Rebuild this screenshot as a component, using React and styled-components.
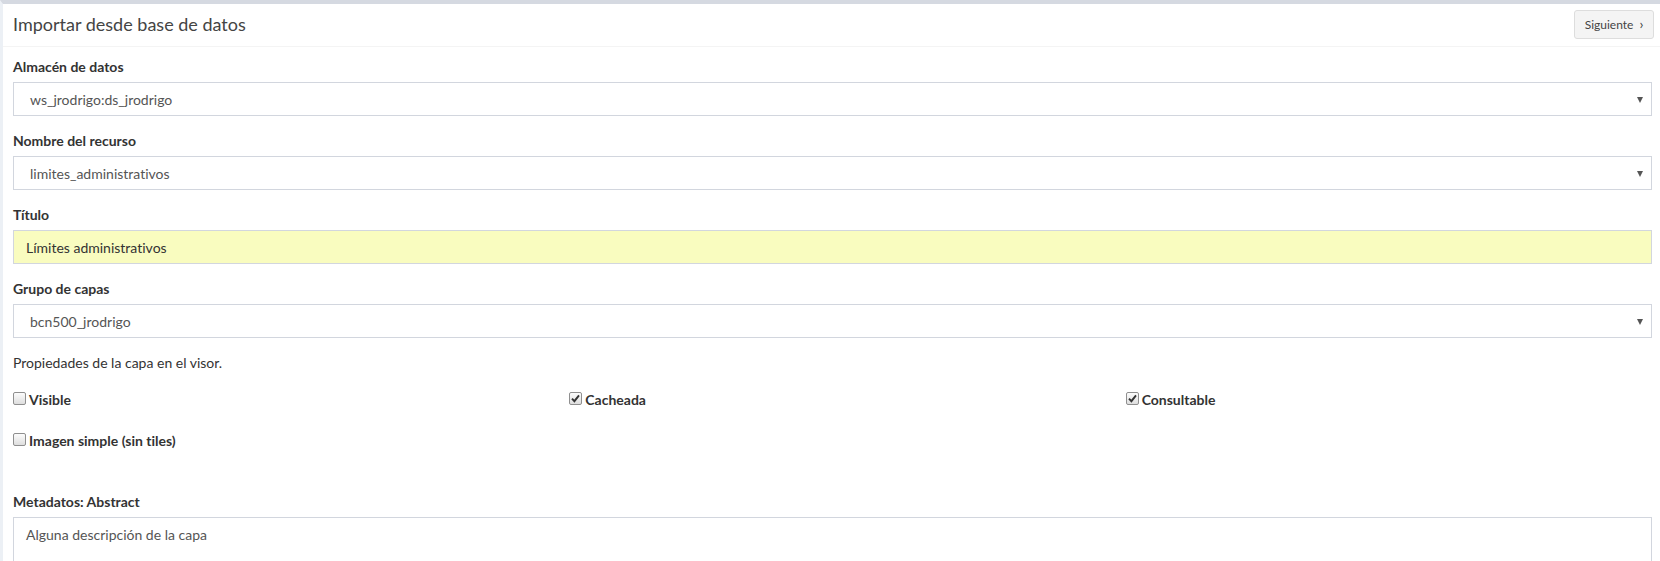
import React from 'react'
import styled, { createGlobalStyle } from 'styled-components'

const GlobalStyle = createGlobalStyle`
  html, body {
    margin: 0;
    padding: 0;
    background: #ecf0f5;
    overflow: hidden;
  }
  body {
    font-family: Lato, "Liberation Sans", sans-serif;
    font-size: 14px;
    color: #333;
    font-variant-ligatures: none;
  }
  * { box-sizing: border-box; }
  input, textarea, button {
    font-variant-ligatures: none;
  }
`

const ImportPanel = () => {
  return (
    <>
      <GlobalStyle />
      <Box>
        <BoxHeader>
          <BoxTitle>Importar desde base de datos</BoxTitle>
          <NextButton type="button">
            Siguiente <Chevron>›</Chevron>
          </NextButton>
        </BoxHeader>

        <BoxBody>
          <FormGroup>
            <Label>Almacén de datos</Label>
            <FakeSelect>
              <span>ws_jrodrigo:ds_jrodrigo</span>
              <Caret />
            </FakeSelect>
          </FormGroup>

          <FormGroup>
            <Label>Nombre del recurso</Label>
            <FakeSelect>
              <span>limites_administrativos</span>
              <Caret />
            </FakeSelect>
          </FormGroup>

          <FormGroup>
            <Label>Título</Label>
            <TextInput $highlight defaultValue="Límites administrativos" />
          </FormGroup>

          <FormGroup>
            <Label>Grupo de capas</Label>
            <FakeSelect>
              <span>bcn500_jrodrigo</span>
              <Caret />
            </FakeSelect>
          </FormGroup>

          <HelpText>Propiedades de la capa en el visor.</HelpText>

          <CheckRow>
            <CheckCol>
              <CheckItem label="Visible" />
            </CheckCol>
            <CheckCol>
              <CheckItem label="Cacheada" checked />
            </CheckCol>
            <CheckCol>
              <CheckItem label="Consultable" checked />
            </CheckCol>
          </CheckRow>
          <CheckRow>
            <CheckCol>
              <CheckItem label="Imagen simple (sin tiles)" />
            </CheckCol>
          </CheckRow>

          <FormGroup $top={41}>
            <Label>Metadatos: Abstract</Label>
            <TextArea defaultValue="Alguna descripción de la capa" />
          </FormGroup>
        </BoxBody>
      </Box>
    </>
  )
}

const CheckItem = ({ label, checked }) => (
  <CheckLabel>
    <CheckBox $checked={checked}>
      {checked && (
        <svg width="9" height="9" viewBox="0 0 9 9">
          <path d="M1 4.6 L3.4 7.2 L8 1.4" fill="none" stroke="#333" strokeWidth="1.9" />
        </svg>
      )}
    </CheckBox>
    {label}
  </CheckLabel>
)

// Styled components
const Box = styled.div`
  background: #fff;
  border-top: 4px solid #d5d9e1;
  border-left: 3px solid #ecf0f5;
  width: 1662px;
  height: 561px;
  overflow: hidden;
`

const BoxHeader = styled.div`
  display: flex;
  justify-content: space-between;
  align-items: center;
  height: 43px;
  padding: 0 8px 0 10px;
  border-bottom: 1px solid #f4f4f4;
`

const BoxTitle = styled.h3`
  margin: 0;
  font-size: 18px;
  font-weight: 400;
  color: #444;
  line-height: 1.1;
`

const NextButton = styled.button`
  display: flex;
  align-items: center;
  gap: 6px;
  height: 29px;
  width: 80px;
  justify-content: center;
  background: #f4f4f4;
  border: 1px solid #ddd;
  border-radius: 3px;
  color: #444;
  font-family: Lato, "Liberation Sans", sans-serif;
  font-size: 12px;
  padding: 0 10px;
  margin-top: -1px;
`

const Chevron = styled.span`
  font-size: 14px;
  line-height: 1;
  margin-top: -2px;
`

const BoxBody = styled.div`
  padding: 10px 10px 0 10px;
`

const FormGroup = styled.div`
  margin-top: ${p => (p.$top ? p.$top + 'px' : '0')};
  margin-bottom: 15px;
`

const Label = styled.label`
  display: block;
  font-weight: 700;
  font-size: 14px;
  line-height: 20px;
  margin-bottom: 5px;
  color: #333;
`

const FakeSelect = styled.div`
  display: flex;
  justify-content: space-between;
  align-items: center;
  height: 34px;
  padding: 0 8px 0 16px;
  border: 1px solid #d2d6de;
  background: #fff;
  font-size: 14px;
  color: #555;
`

const Caret = styled.span`
  width: 0;
  height: 0;
  border-left: 3.5px solid transparent;
  border-right: 3.5px solid transparent;
  border-top: 6px solid #555;
  margin-top: 1px;
`

const TextInput = styled.input`
  display: block;
  width: 100%;
  height: 34px;
  padding: 0 12px;
  border: 1px solid #d2d6de;
  border-radius: 0;
  background: ${p => (p.$highlight ? '#f9fcbf' : '#fff')};
  font-family: Lato, "Liberation Sans", sans-serif;
  font-size: 14px;
  color: #333;
  outline: none;
`

const HelpText = styled.p`
  margin: 0 0 17px 0;
  line-height: 20px;
  color: #333;
`

const CheckRow = styled.div`
  display: grid;
  grid-template-columns: repeat(3, 1fr);
  margin: 0 -15px 21px -15px;
`

const CheckCol = styled.div`
  padding: 0 15px;
`

const CheckLabel = styled.label`
  display: flex;
  align-items: center;
  gap: 3px;
  font-weight: 700;
  line-height: 20px;
  color: #333;
`

const CheckBox = styled.span`
  display: inline-flex;
  align-items: center;
  justify-content: center;
  width: 13px;
  height: 13px;
  margin-top: -4px;
  border: 1px solid #8f8f8f;
  border-radius: 2px;
  background: linear-gradient(#fcfcfc, #dedede);
`

const TextArea = styled.textarea`
  display: block;
  width: 100%;
  height: 70px;
  padding: 8px 12px;
  border: 1px solid #d2d6de;
  border-radius: 0;
  font-family: Lato, "Liberation Sans", sans-serif;
  font-size: 14px;
  color: #555;
  resize: none;
  outline: none;
`

export default ImportPanel
